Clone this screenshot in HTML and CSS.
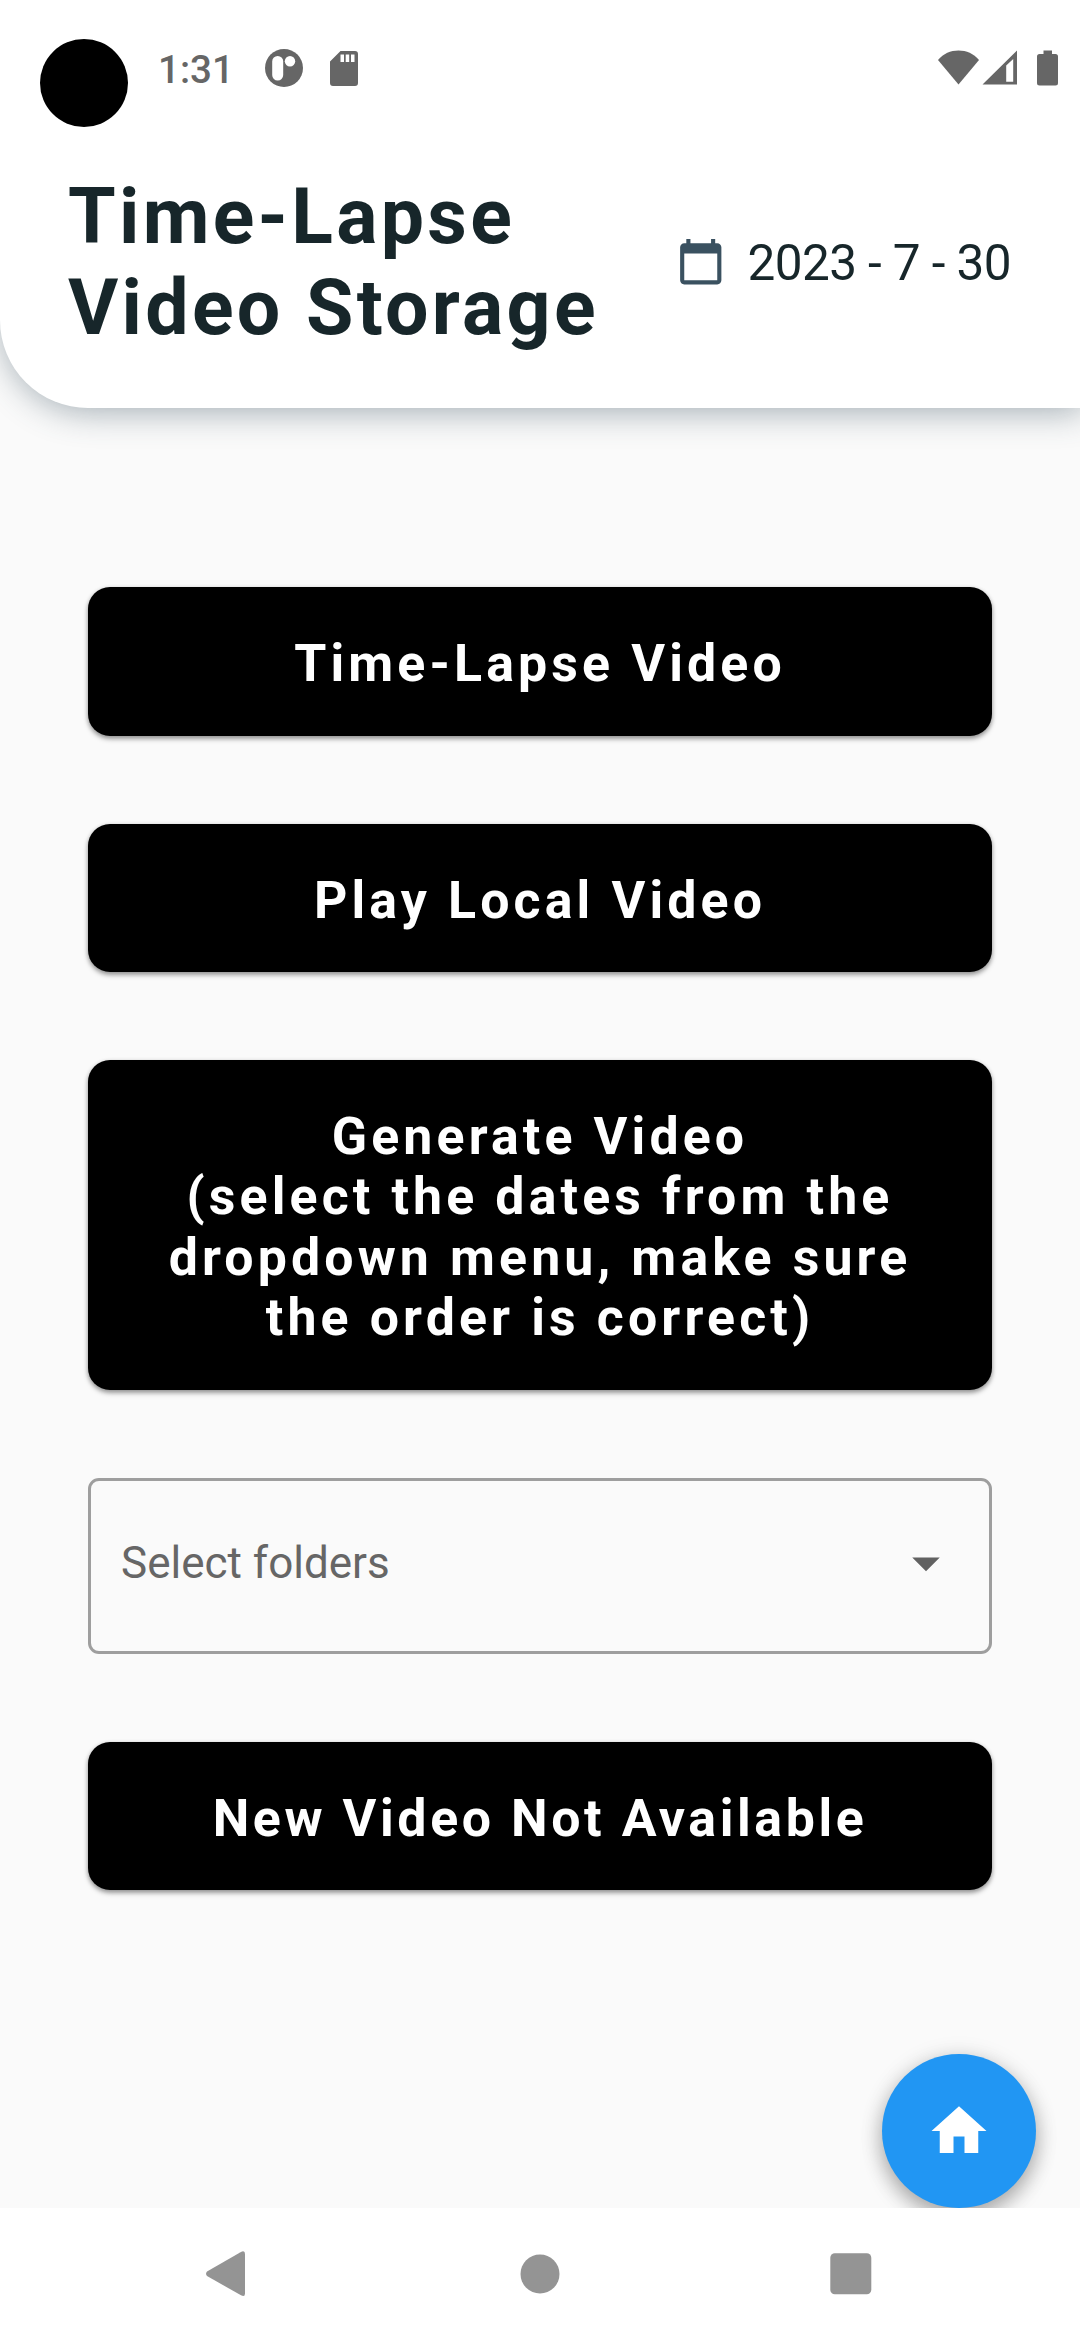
FILE: index.html
```html
<!DOCTYPE html>
<html lang="en">
<head>
<meta charset="utf-8">
<title>Time-Lapse Video Storage</title>
<link rel="stylesheet" href="styles.css">
</head>
<body>
<div class="screen">
  <header class="app-header">
    <div class="status-bar">
      <span class="camera"></span>
      <span class="clock">1:31</span>
      <svg class="status-app" width="38" height="38" viewBox="0 0 38 38">
        <circle cx="19" cy="19" r="19" fill="#666"/>
        <rect x="7.2" y="7" width="11" height="24.5" rx="5.5" fill="#fff"/>
        <circle cx="25" cy="12.3" r="5.2" fill="#fff"/>
      </svg>
      <svg class="status-sd" width="28" height="35" viewBox="0 0 28 35">
        <path fill="#666" fill-rule="evenodd" d="M10.5 0H25a3 3 0 0 1 3 3v29a3 3 0 0 1-3 3H3a3 3 0 0 1-3-3V10.5zM10.500 3.500v7.500h3.500v-7.500zM15.700 3.500v7.500h3.500v-7.500zM21 3.500v7.500h3.500v-7.500z"/>
      </svg>
      <svg class="status-signals" width="121" height="36" viewBox="0 0 121 36">
        <g fill="#666">
          <path d="M20.500 34.500L0 10C5.500 3.500 12.500.5 20.500.5S35.500 3.500 41 10z"/>
          <path fill-rule="evenodd" d="M44.500 34.500L79 .5v34zM68.200 15.500v16.200h7V9z"/>
          <path d="M105.500.5h8.500V4h3.500a2.500 2.500 0 0 1 2.500 2.500V33a2.500 2.500 0 0 1-2.500 2.500H101.500A2.500 2.500 0 0 1 99 33V6.500A2.500 2.500 0 0 1 101.500 4h4z"/>
        </g>
      </svg>
    </div>
    <div class="title-row">
      <h1 class="title">Time-Lapse<br>Video Storage</h1>
      <div class="date">
        <svg class="date-icon" width="49.5" height="49.5" viewBox="0 0 24 24"><path fill="#3a5160" d="M20 3h-1V1h-2v2H7V1H5v2H4c-1.100 0-2 .9-2 2v16c0 1.100.9 2 2 2h16c1.100 0 2-.9 2-2V5c0-1.100-.9-2-2-2zm0 18H4V8h16v13z"/></svg>
        <span class="date-text">2023 - 7 - 30</span>
      </div>
    </div>
  </header>
  <main class="content">
    <button class="action">Time-Lapse Video</button>
    <button class="action">Play Local Video</button>
    <button class="action">Generate Video<br>(select the dates from the<br>dropdown menu, make sure<br>the order is correct)</button>
    <div class="select">
      <span>Select folders</span>
      <svg width="66" height="66" viewBox="0 0 24 24"><path fill="#616161" d="M7 10l5 5 5-5z"/></svg>
    </div>
    <button class="action action-status">New Video Not Available</button>
    <button class="fab" aria-label="Home">
      <svg width="66" height="66" viewBox="0 0 24 24"><path fill="#fff" d="M10 20v-6h4v6h5v-8h3L12 3 2 12h3v8z"/></svg>
    </button>
  </main>
  <nav class="nav-bar">
    <svg width="40" height="46" viewBox="0 0 40 46"><path fill="#949494" d="M1 20.500L34.500 1.200Q39 -1.200 39 3V42.500Q39 46.500 35 44.300L1 25Q-1 22.800 1 20.500z"/></svg>
    <svg class="nav-home" width="40" height="40" viewBox="0 0 40 40"><circle cx="20" cy="20" r="19.500" fill="#949494"/></svg>
    <svg width="42" height="42" viewBox="0 0 42 42"><rect x=".3" y=".3" width="41" height="41" rx="4.500" fill="#949494"/></svg>
  </nav>
</div>
</body>
</html>
```
FILE: styles.css
```css
* { box-sizing: border-box; }
body {
  margin: 0;
  font-family: Roboto, "Noto Sans", sans-serif;
  text-rendering: optimizeLegibility;
  background: #fff;
}
svg { display: block; flex: none; }
/* The page colour also shows behind the rounded header corner. */
.screen {
  width: 1080px;
  height: 2340px;
  display: flex;
  flex-direction: column;
  background: #fafafa;
  overflow: hidden;
}
.app-header {
  position: relative;
  z-index: 1;
  height: 408px;
  flex: none;
  background: #fff;
  border-bottom-left-radius: 88px;
  box-shadow: 3px 3px 34px rgba(58, 81, 96, 0.48);
}
.status-bar {
  height: 172px;
  display: flex;
  align-items: flex-start;
  padding: 39px 21px 0 40px;
}
.camera {
  width: 88px;
  height: 88px;
  border-radius: 50%;
  background: #000;
}
.clock {
  width: 107px;
  margin: 8px 0 0 30px;
  font-size: 38.5px;
  line-height: 46px;
  font-weight: 500;
  color: #666;
}
.status-app { margin-top: 10px; }
.status-sd { margin: 12px 0 0 27px; }
.status-signals { margin: 11px 0 0 auto; }
.title-row {
  display: flex;
  justify-content: space-between;
  padding: 0 66px 0 68px;
}
.title {
  margin: 0;
  font-size: 77px;
  line-height: 91px;
  font-weight: 700;
  letter-spacing: 3.3px;
  color: #17262a;
}
.date {
  display: flex;
  align-items: flex-start;
  width: 338px;
  padding-top: 62px;
}
.date-icon { margin: 3px 22px 0 0; }
.date-text {
  font-size: 49.5px;
  line-height: 58px;
  letter-spacing: -0.6px;
  color: #17262a;
  white-space: nowrap;
}
.content {
  position: relative;
  height: 1800px;
  flex: none;
  display: flex;
  flex-direction: column;
  gap: 88px;
  padding: 179px 88px 0;
  background: #fafafa;
  overflow: hidden;
}
.action {
  flex: none;
  border: 0;
  padding: 47px 20px 41.1px;
  border-radius: 22px;
  background: #000;
  color: #fff;
  font: 700 51.84px/60.4px Roboto, "Noto Sans", sans-serif;
  letter-spacing: 4.125px;
  text-align: center;
  text-rendering: optimizeLegibility;
  box-shadow: 0 3px 5px rgba(0, 0, 0, 0.35), 0 1px 4px rgba(0, 0, 0, 0.15);
}
.action-status { letter-spacing: 3.6px; }
.select {
  flex: none;
  height: 176px;
  display: flex;
  align-items: center;
  justify-content: space-between;
  padding: 0 30px 6px;
  border: 3px solid #9e9e9e;
  border-radius: 11px;
  font-size: 44px;
  line-height: 52px;
  color: #666;
}
.fab {
  position: absolute;
  right: 44px;
  bottom: 0;
  width: 154px;
  height: 154px;
  display: flex;
  align-items: center;
  justify-content: center;
  border: 0;
  padding: 0;
  border-radius: 50%;
  background: #2196f3;
  box-shadow: 0 9px 20px rgba(0, 0, 0, 0.28), 0 3px 24px rgba(0, 0, 0, 0.12);
}
.nav-bar {
  height: 132px;
  flex: none;
  display: flex;
  align-items: center;
  justify-content: space-between;
  padding: 0 208px 0 206px;
  background: #fff;
}
.nav-home { margin-left: 4px; }
```
